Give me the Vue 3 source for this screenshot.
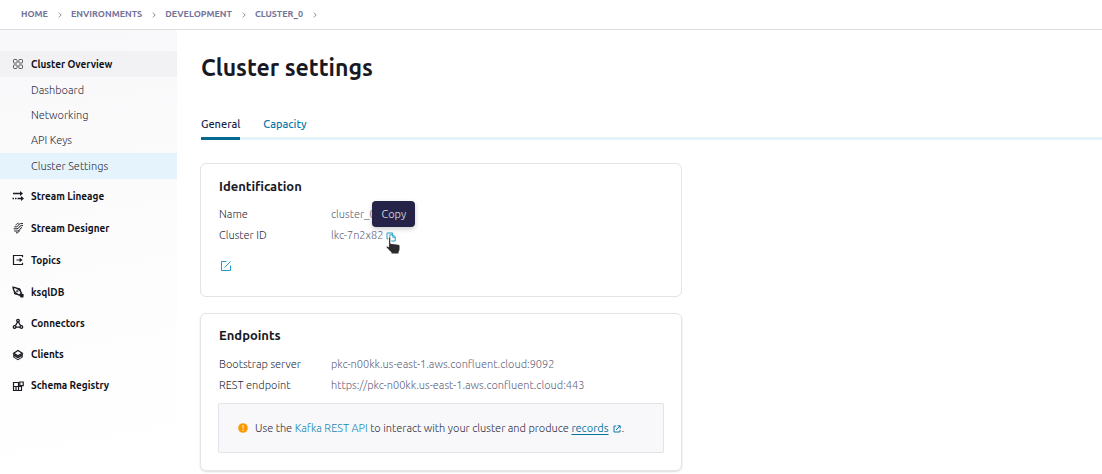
<script setup>
const crumbs = ['HOME', 'ENVIRONMENTS', 'DEVELOPMENT', 'CLUSTER_0']
const pages = ['Dashboard', 'Networking', 'API Keys', 'Cluster Settings']
const streamLinks = [
  { label: 'Stream Lineage', icon: 'lineage' },
  { label: 'Stream Designer', icon: 'designer' },
  { label: 'Topics', icon: 'topics' },
  { label: 'ksqlDB', icon: 'rocket' },
]
const dataLinks = [
  { label: 'Connectors', icon: 'connectors' },
  { label: 'Clients', icon: 'clients' },
  { label: 'Schema Registry', icon: 'schema' },
]
const endpoints = [
  { label: 'Bootstrap server', value: 'pkc-n00kk.us-east-1.aws.confluent.cloud:9092' },
  { label: 'REST endpoint', value: 'https://pkc-n00kk.us-east-1.aws.confluent.cloud:443' },
]
</script>

<template>
  <div class="page">
    <header class="topbar">
      <nav class="crumbs" aria-label="Breadcrumb">
        <template v-for="c in crumbs" :key="c">
          <a href="#">{{ c }}</a>
          <svg class="chevron" viewBox="0 0 4 6" aria-hidden="true"><path d="M.8.6 3.2 3 .8 5.4" /></svg>
        </template>
      </nav>
    </header>

    <div class="body">
      <aside class="sidebar">
        <nav aria-label="Cluster">
          <a href="#" class="item overview">
            <svg class="icon" viewBox="0 0 12 12" aria-hidden="true">
              <rect x="1.5" y="1.5" width="3.6" height="3.6" rx=".8" /><rect x="6.9" y="1.5" width="3.6" height="3.6" rx=".8" />
              <rect x="1.5" y="6.9" width="3.6" height="3.6" rx=".8" /><rect x="6.9" y="6.9" width="3.6" height="3.6" rx=".8" />
            </svg>
            <span>Cluster Overview</span>
          </a>
          <div class="pages">
            <a v-for="p in pages" :key="p" href="#" class="sub" :class="{ active: p === 'Cluster Settings' }">{{ p }}</a>
          </div>
          <div class="group">
            <a v-for="l in streamLinks" :key="l.label" href="#" class="item">
              <svg class="icon" viewBox="0 0 12 12" aria-hidden="true">
                <g v-if="l.icon === 'lineage'">
                  <path d="M1 3.5h8M.5 8.5H2M3 8.5h1.5M5.5 8.5H9" stroke-width="1.3" />
                  <path class="solid" d="M8 1 11 3.5 8 6zM9 6l3 2.5L9 11z" />
                </g>
                <g v-else-if="l.icon === 'designer'">
                  <path d="M11 1.6H8.6C6.2 1.6 6.6 4.8 4.4 4.8H2.4M11 3.6H9.4C7 3.6 7.4 6.8 5 6.8H1.6M10 5.6C7.8 5.6 8 9 5.6 9H2.2M4 10.9c2.2 0 2.8-1 3.6-2.4M3.8 3.2C4.6 2 5 1.4 6.6 1.2" />
                </g>
                <g v-else-if="l.icon === 'topics'">
                  <path d="M10.5 3.2V1.5h-9v9h9V8.8M4.5 6H9" stroke-width="1.2" />
                  <path class="solid" d="m7.6 3.8 3 2.2-3 2.2z" />
                </g>
                <g v-else>
                  <path d="M1 1.2C4.6 1.6 8 3.4 9.4 7L7.2 9.2C3.8 8 1.4 4.8 1 1.2Z" stroke-width="1.4" />
                  <path d="M2.2 5.6 2.6 8l2.2.4M5.6 2.2l2.4.6.6 2" stroke-width="1" />
                  <path class="solid" d="m9.8 7.4 2 1.2-.4 2.8-2.6.2-1.4-1.8z" />
                  <circle cx="5.2" cy="5.2" r=".7" />
                </g>
              </svg>
              <span>{{ l.label }}</span>
            </a>
          </div>
          <div class="group compact">
            <a v-for="l in dataLinks" :key="l.label" href="#" class="item">
              <svg class="icon" viewBox="0 0 12 12" aria-hidden="true">
                <g v-if="l.icon === 'connectors'" stroke-width="1.3">
                  <path d="M5.6 4 3.4 7.6M6.4 4l2.2 3.6M4 9.2h4" />
                  <circle cx="6" cy="2.6" r="1.3" /><circle cx="2.6" cy="9" r="1.3" /><circle cx="9.4" cy="9" r="1.3" />
                </g>
                <g v-else-if="l.icon === 'clients'">
                  <path d="M6 1.5 10.3 4.2 6 6.8 1.7 4.2Z" stroke-width="1.3" />
                  <path class="solid" d="m1.2 4.6 4.8 3 4.8-3v3.6L6 11.2 1.2 8.2z" />
                  <path class="light" d="m2.4 7.6 3.6 2.2 3.6-2.2" />
                </g>
                <g v-else stroke-width="1.2">
                  <path d="M1.5 2.5h5v8h-5zM6.5 6.5h3v4h-3M1.5 6.5h5M4 6.5v4" />
                  <path d="M7.8 2h3.4v3.6H7.8z" />
                </g>
              </svg>
              <span>{{ l.label }}</span>
            </a>
          </div>
        </nav>
      </aside>

      <main class="main">
        <h1>Cluster settings</h1>
        <nav class="tabs" aria-label="Settings">
          <a href="#" class="tab current">General</a>
          <a href="#" class="tab">Capacity</a>
        </nav>

        <section class="card ident">
          <h2>Identification</h2>
          <dl>
            <dt>Name</dt>
            <dd>cluster_0</dd>
            <dt>Cluster ID</dt>
            <dd class="id">
              <span>lkc-7n2x82</span>
              <span class="copywrap">
                <button class="copy" type="button" aria-label="Copy">
                  <svg viewBox="0 0 10 10" aria-hidden="true"><path d="M3 7H1V1h5.5v1.5M3.8 2.8h3.4l2 2V9H3.8zM6.8 3v2.2H9" /></svg>
                </button>
                <span class="tip" role="tooltip">Copy</span>
                <svg class="hand" viewBox="0 0 16 19" aria-hidden="true">
                  <path d="M3.6 1.8c0-1.4 2.2-1.4 2.2 0v5.6l7.2.8c1.4.2 2 1 2 2.2v2.8c0 1-.8 2-1 2.8v2H6v-1.6c-1-1.2-2.6-2.6-4.4-4.4-1-1-.2-2.4 1-1.8l1 .6z" />
                </svg>
              </span>
            </dd>
          </dl>
          <button class="edit" type="button" aria-label="Edit">
            <svg viewBox="0 0 12 12" aria-hidden="true"><path d="M6.5 1.5h-5v9h9v-5M4.5 7.5l6-6" /></svg>
          </button>
        </section>

        <section class="card ends">
          <h2>Endpoints</h2>
          <dl>
            <template v-for="e in endpoints" :key="e.label">
              <dt>{{ e.label }}</dt>
              <dd>{{ e.value }}</dd>
            </template>
          </dl>
          <div class="note">
            <svg class="warn" viewBox="0 0 10 10" aria-hidden="true">
              <circle cx="5" cy="5" r="4.8" /><path d="M5 2v3.6M5 6.8V8" />
            </svg>
            <p>
              Use the <a href="#">Kafka REST API</a> to interact with your cluster and produce
              <a href="#" class="records">records</a>
              <svg class="ext" viewBox="0 0 8 8" aria-hidden="true"><path d="M3.2 1H1v6h6V4.8M4.5.8h2.7v2.7M3 5l4-4" /></svg>.
            </p>
          </div>
        </section>
      </main>
    </div>
  </div>
</template>

<style>
body { background: #fff; }
</style>

<style scoped>
.page {
  display: flex;
  flex-direction: column;
  min-height: 100vh;
  font-family: Ubuntu, "Noto Sans", sans-serif;
  font-size: 11px;
  font-weight: 300;
  line-height: 21px;
  color: #2c2c3c;
}
.page * { box-sizing: border-box; }
a { color: inherit; text-decoration: none; }
.topbar { height: 30px; border-bottom: 1px solid #dcdde1; padding-left: 21px; }
.crumbs { display: flex; align-items: center; height: 28px; font-size: 9px; font-weight: 700; color: #73739a; }
.chevron { width: 4px; height: 6px; margin: 2px 9px 0 10px; fill: none; stroke: #8a8aa0; stroke-width: 1; }

.body { display: flex; flex: 1; }
.sidebar { flex: 0 0 177px; padding-top: 21px; background: linear-gradient(170deg, #f8f8fa, #fdfdfd 60%, #fff); }
.item { display: flex; align-items: center; gap: 7px; height: 32px; padding-left: 12px; font-size: 10px; font-weight: 700; color: #101018; }
.overview { height: 26px; background: #f2f2f4; }
.compact .item { height: 31px; }
.icon { width: 12px; height: 12px; fill: none; stroke: #1b1b22; stroke-width: 1; }
.overview .icon { stroke: #55555c; }
.icon .solid { fill: #1b1b22; stroke: none; }
.icon .light { stroke: #fff; stroke-width: .8; }
.pages { padding: 1px 0; }
.sub { display: block; height: 25px; line-height: 25px; padding-left: 31px; }
.sub.active { height: 26px; line-height: 26px; background: #e5f4fc; }

.main { flex: 1; min-width: 0; padding: 22px 0 3px 23px; }
h1 { margin: 0 0 0 1px; font-size: 23px; font-weight: 700; line-height: 32px; color: #191924; }
.tabs { display: flex; gap: 23px; margin: 29px 0 23px 1px; border-bottom: 3px solid #e5f3fb; }
.tab { height: 27px; line-height: 23px; margin-bottom: -3px; font-weight: 500; color: #0878aa; }
.current { color: #17234f; border-bottom: 3px solid #066990; }

.card { max-width: 482px; padding: 12px 17px 17px; border: 1px solid #e4e4e8; border-radius: 6px; }
.card + .card { margin-top: 16px; box-shadow: 0 1px 2px #0002; }
h2 { margin: 0; padding-left: 1px; font-size: 13px; font-weight: 700; line-height: 20px; color: #191924; }
dl { display: grid; grid-template-columns: 112px 1fr; margin: 8px 0 0 1px; }
.ends { padding-top: 11px; }
.ends dl { margin-top: 9px; }
dd { margin: 0; color: #5f5f7c; }
.id { display: flex; gap: 3px; align-items: center; }
.copywrap { position: relative; display: flex; }
button { display: block; padding: 0; border: 0; background: none; }
button svg { display: block; fill: none; stroke: #249bc4; stroke-width: 1; }
.copy svg { width: 10px; height: 10px; margin-top: 2px; }
.edit { margin: 14px 0 0 2px; }
.edit svg { width: 12px; height: 12px; }
.ident { min-height: 134px; }
.tip { position: absolute; left: -14px; bottom: 15px; padding: 2px 9px; border-radius: 4px; background: #252347; color: #e6e6f0; line-height: 22px; box-shadow: 0 2px 5px #0003; }
.hand { position: absolute; left: -1px; top: 6px; width: 16px; height: 19px; fill: #2b2b2e; stroke: #fff; stroke-width: 1; }
.note { display: flex; align-items: center; gap: 7px; min-height: 50px; margin-top: 7px; padding: 0 19px; border: 1px solid #e3e3e9; border-radius: 2px; background: #f8f8fa; }
.note p { margin: 0; }
.note a { color: #1386b4; }
.note .records { color: #0674a0; font-weight: 400; text-decoration: underline; text-underline-offset: 2px; }
.warn { width: 10px; height: 10px; fill: #fb9a05; }
.warn path { stroke: #fff3d6; stroke-width: 1; }
.ext { width: 8px; height: 8px; margin: 0 1px 0 4px; vertical-align: -1px; fill: none; stroke: #0b7ba8; stroke-width: 1; }
</style>
